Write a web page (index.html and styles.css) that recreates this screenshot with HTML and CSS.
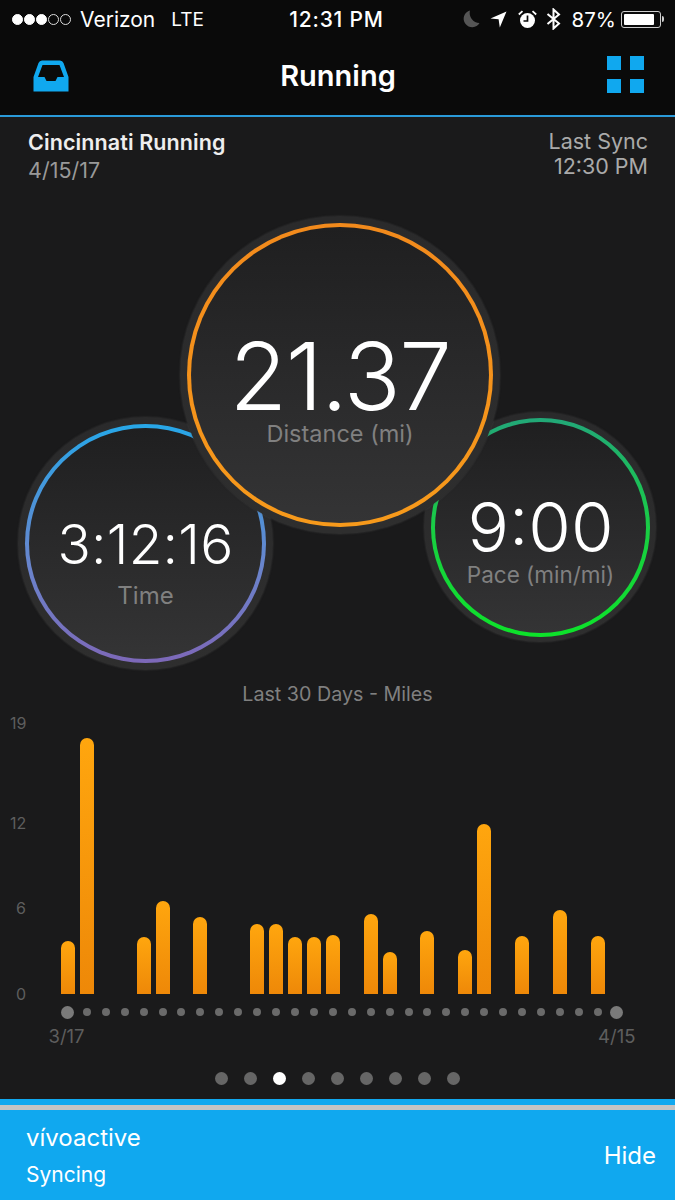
FILE: index.html
```html
<!DOCTYPE html>
<html lang="en">
<head>
  <meta charset="UTF-8" />
  <meta name="viewport" content="width=device-width, initial-scale=1.0"/>
  <title>Running</title>
  <link rel="stylesheet" href="styles.css">
</head>
<body>

<div class="page">

  <!-- Status bar -->
  <div class="status-bar">
    <div class="status-left">
      <span class="signal">
        <i class="on"></i><i class="on"></i><i class="on"></i><i></i><i></i>
      </span>
      <span>Verizon</span>
      <span class="network">LTE</span>
    </div>
    <div class="status-time">12:31 PM</div>
    <div class="status-right">
      <svg class="icon-moon" width="18" height="18" viewBox="0 0 18 18"><path d="M8 .5A8.500 8.500 0 1 0 17.500 13A10 10 0 0 1 8 .5Z" fill="#555"/></svg>
      <svg class="icon-arrow" width="17" height="17" viewBox="0 0 17 17"><path d="M16.500 .5L9.800 16.500L8.600 8.300L.5 7.600Z" fill="#fff"/></svg>
      <svg class="icon-alarm" width="19" height="19" viewBox="0 0 19 19">
        <circle cx="9.500" cy="10.500" r="7.500" fill="#fff"/>
        <path d="M9.500 5.500V11H5.500" fill="none" stroke="#0a0a0a" stroke-width="1.700"/>
        <path d="M.8 4.500L4.500 1.200M18.200 4.500L14.500 1.200" stroke="#fff" stroke-width="1.800"/>
      </svg>
      <svg class="icon-bt" width="15" height="22" viewBox="0 0 15 22"><path d="M1.500 6L13 15.500L7.500 20.500V1.500L13 6.500L1.500 16" fill="none" stroke="#fff" stroke-width="2"/></svg>
      <span class="battery-pct">87%</span>
      <span class="battery"><span class="battery-level"></span></span>
    </div>
  </div>

  <!-- Nav bar -->
  <div class="nav-bar">
    <svg class="inbox-icon" width="36" height="32" viewBox="0 0 36 32">
      <path d="M.5 17L5.500 3Q6.500 .5 9 .5H27Q29.500 .5 30.500 3L35.500 17V31.500H.5Z M9.500 5L5 17H11.500L13.500 21H22.500L24.500 17H31L26.500 5Z" fill="#10a8ef" fill-rule="evenodd"/>
    </svg>
    <div class="nav-title">Running</div>
    <div class="grid-icon"><i></i><i></i><i></i><i></i></div>
  </div>

  <!-- Activity header -->
  <div class="activity-head">
    <div>
      <div class="activity-name">Cincinnati Running</div>
      <div class="activity-date">4/15/17</div>
    </div>
    <div class="sync">Last Sync<br>12:30 PM</div>
  </div>

  <!-- The three overlapping gauges -->
  <div class="gauges">
    <div class="gauge gauge-time">
      <div class="ring">
        <div class="face">
          <div class="value">3:12:16</div>
          <div class="label">Time</div>
        </div>
      </div>
    </div>
    <div class="gauge gauge-pace">
      <div class="ring">
        <div class="face">
          <div class="value">9:00</div>
          <div class="label">Pace (min/mi)</div>
        </div>
      </div>
    </div>
    <div class="gauge gauge-distance">
      <div class="ring">
        <div class="face">
          <div class="value">21.37</div>
          <div class="label">Distance (mi)</div>
        </div>
      </div>
    </div>
  </div>

  <!-- Chart -->
  <div class="chart-title">Last 30 Days - Miles</div>
  <div class="chart">
    <div class="y-axis">
      <div style="height: 100px">19</div>
      <div style="height: 85px">12</div>
      <div style="height: 86px">6</div>
      <div>0</div>
    </div>
    <div class="plot">
      <div class="bars">
        <div class="bar" style="height: 53px"></div>
        <div class="bar" style="height: 256px"></div>
        <div></div>
        <div></div>
        <div class="bar" style="height: 57px"></div>
        <div class="bar" style="height: 93px"></div>
        <div></div>
        <div class="bar" style="height: 77px"></div>
        <div></div>
        <div></div>
        <div class="bar" style="height: 70px"></div>
        <div class="bar" style="height: 70px"></div>
        <div class="bar" style="height: 57px"></div>
        <div class="bar" style="height: 57px"></div>
        <div class="bar" style="height: 59px"></div>
        <div></div>
        <div class="bar" style="height: 80px"></div>
        <div class="bar" style="height: 42px"></div>
        <div></div>
        <div class="bar" style="height: 63px"></div>
        <div></div>
        <div class="bar" style="height: 44px"></div>
        <div class="bar" style="height: 170px"></div>
        <div></div>
        <div class="bar" style="height: 58px"></div>
        <div></div>
        <div class="bar" style="height: 84px"></div>
        <div></div>
        <div class="bar" style="height: 58px"></div>
        <div></div>
      </div>
      <div class="ticks">
        <i class="end"></i><i></i><i></i><i></i><i></i><i></i><i></i><i></i><i></i><i></i>
        <i></i><i></i><i></i><i></i><i></i><i></i><i></i><i></i><i></i><i></i>
        <i></i><i></i><i></i><i></i><i></i><i></i><i></i><i></i><i></i><i class="end"></i>
      </div>
      <div class="dates"><span>3/17</span><span>4/15</span></div>
    </div>
  </div>

  <div class="pager">
    <i></i><i></i><i class="active"></i><i></i><i></i><i></i><i></i><i></i><i></i>
  </div>

  <!-- Sync banner -->
  <div class="banner">
    <div class="banner-line"></div>
    <div class="banner-body">
      <div>
        <div class="device">vívoactive</div>
        <div class="device-state">Syncing</div>
      </div>
      <div class="hide">Hide</div>
    </div>
  </div>

</div>

</body>
</html>
```

FILE: styles.css
```css
* { box-sizing: border-box; }
body {
  margin: 0;
  font-family: Inter, 'Liberation Sans', sans-serif;
  background: #1a1a1b;
  color: #fff;
}

i { display: block; }

.page {
  display: flex;
  flex-direction: column;
  width: 675px;
  height: 1200px;
  overflow: hidden;
}

/* status bar */
.status-bar {
  display: grid;
  grid-template-columns: 1fr auto 1fr;
  align-items: center;
  height: 38px;
  padding: 0 14px 0 12px;
  background: #0a0a0a;
  font-size: 21px;
}

.status-left, .status-right {
  display: flex;
  align-items: center;
}

.signal {
  display: flex;
  gap: 1px;
  margin-right: 9px;
}

.signal i {
  width: 11px;
  height: 11px;
  border: 1px solid #ddd;
  border-radius: 50%;
}

.signal i.on {
  background: #fff;
  border-color: #fff;
}

.network {
  margin-left: 16px;
  font-size: 19px;
}

.status-time {
  font-weight: 500;
  letter-spacing: 0.8px;
}

.status-right {
  justify-content: flex-end;
}

.icon-moon { margin-right: 10px; }
.icon-arrow { margin-right: 11px; }
.icon-alarm { margin-right: 9px; }
.icon-bt { margin-right: 11px; }

.battery-pct {
  margin-right: 5px;
  font-size: 20.500px;
}

.battery {
  position: relative;
  display: block;
  width: 40px;
  height: 17px;
  padding: 2px;
  border: 1px solid #ccc;
  border-radius: 3px;
}

.battery::after {
  content: "";
  position: absolute;
  right: -4px;
  top: 4px;
  width: 2px;
  height: 6px;
  background: #ccc;
  border-radius: 0 2px 2px 0;
}

.battery-level {
  display: block;
  width: 87%;
  height: 100%;
  background: #fff;
  border-radius: 1px;
}

/* nav bar */
.nav-bar {
  display: flex;
  justify-content: space-between;
  align-items: center;
  height: 79px;
  padding: 0 31px 2px 33px;
  background: #0a0a0a;
  border-bottom: 2px solid #2a9ad9;
}

.nav-title {
  font-size: 29px;
  font-weight: 600;
}

.grid-icon {
  display: grid;
  grid-template-columns: 14px 14px;
  grid-auto-rows: 14px;
  gap: 9px;
  margin-bottom: 3px;
}

.grid-icon i {
  background: #10a8ef;
}

/* activity header */
.activity-head {
  display: flex;
  justify-content: space-between;
  height: 99px;
  padding: 12px 27px 0 28px;
  font-size: 21.500px;
  line-height: 26px;
}

.activity-name {
  font-weight: 600;
  letter-spacing: 0.1px;
  color: #eee;
}

.activity-date {
  margin-top: 2px;
  color: #999;
}

.sync {
  text-align: right;
  color: #aaa;
  line-height: 25px;
}

/* gauges */
.gauges {
  position: relative;
  height: 466px;
}

.gauge {
  position: absolute;
  border-radius: 50%;
  background: linear-gradient(#2a2a2b, #2e2e2e);
  box-shadow: 0 0 2px rgba(80, 80, 80, 0.6);
}

.ring {
  width: 100%;
  height: 100%;
  padding: 4px;
  border-radius: 50%;
}

.face {
  display: flex;
  flex-direction: column;
  align-items: center;
  width: 100%;
  height: 100%;
  border-radius: 50%;
  background: linear-gradient(#1f1f20, #343435);
}

.value {
  font-weight: 300;
  line-height: 0.85;
}

.label {
  line-height: 28px;
  color: #808080;
}

.gauge-distance {
  left: 180px;
  top: 0;
  width: 320px;
  height: 318px;
  padding: 7px;
  z-index: 2;
}

.gauge-distance .ring {
  background: linear-gradient(#f28a1c, #f79a1b);
}

.gauge-distance .face {
  padding-top: 110px;
}

.gauge-distance .value {
  font-size: 94px;
  letter-spacing: -1.500px;
}

.gauge-distance .label {
  font-size: 23.500px;
  margin-top: 3px;
}

.gauge-time {
  left: 18px;
  top: 201px;
  width: 255px;
  height: 253px;
  padding: 7px;
}

.gauge-time .ring {
  background: linear-gradient(#27a7e8, #6a84cc 60%, #7d68b8);
}

.gauge-time .face {
  padding-top: 93px;
}

.gauge-time .value {
  font-size: 55px;
  letter-spacing: 0.2px;
}

.gauge-time .label {
  font-size: 24px;
  margin-top: 14px;
}

.gauge-pace {
  left: 424px;
  top: 196px;
  width: 232px;
  height: 230px;
  padding: 6px 6px 5px 7px;
}

.gauge-pace .ring {
  background: linear-gradient(#22a878, #18d040 55%, #0de32a);
}

.gauge-pace .face {
  padding-top: 76px;
}

.gauge-pace .value {
  font-size: 69px;
}

.gauge-pace .label {
  font-size: 22.500px;
  margin-top: 4px;
}

/* chart */
.chart-title {
  text-align: center;
  font-size: 19.700px;
  line-height: 24px;
  color: #808080;
}

.chart {
  display: flex;
  margin-top: 11px;
}

.y-axis {
  width: 58.500px;
  margin-top: -4px;
  padding-left: 10px;
  font-size: 16px;
  line-height: 20px;
  color: #5e5e5e;
}

.y-axis div {
  width: 16px;
  text-align: right;
}

.plot {
  width: 568px;
}

.bars, .ticks {
  display: grid;
  grid-template-columns: repeat(30, 18.930px);
  justify-items: center;
}

.bars {
  align-items: end;
  height: 277px;
}

.bar {
  width: 14px;
  border-radius: 7px 7px 0 0;
  background: linear-gradient(#ffa60e, #ee8808);
}

.ticks {
  align-items: center;
  height: 14px;
  margin-top: 11px;
}

.ticks i {
  width: 8px;
  height: 8px;
  border-radius: 50%;
  background: #6a6a6a;
}

.ticks i.end {
  width: 13px;
  height: 13px;
  background: #7a7a7a;
}

.dates {
  display: flex;
  justify-content: space-between;
  margin: 6px -9px 0 -10px;
  font-size: 18.500px;
  line-height: 22px;
  color: #5e5e5e;
}

/* pager */
.pager {
  display: flex;
  justify-content: center;
  gap: 16px;
  margin-top: 25px;
}

.pager i {
  width: 13px;
  height: 13px;
  border-radius: 50%;
  background: #666;
}

.pager i.active {
  background: #fff;
}

/* banner */
.banner {
  flex: 1;
  display: flex;
  flex-direction: column;
  margin-top: 14px;
  background: #10a8ef;
}

.banner-line {
  height: 5px;
  margin-top: 6px;
  background: #c4c4c4;
}

.banner-body {
  display: flex;
  justify-content: space-between;
  align-items: center;
  flex: 1;
  padding: 0 19px 0 26px;
}

.device {
  font-size: 24px;
  line-height: 30px;
}

.device-state {
  margin-top: 9px;
  font-size: 21px;
  line-height: 26px;
}

.hide {
  font-size: 24px;
}
```
